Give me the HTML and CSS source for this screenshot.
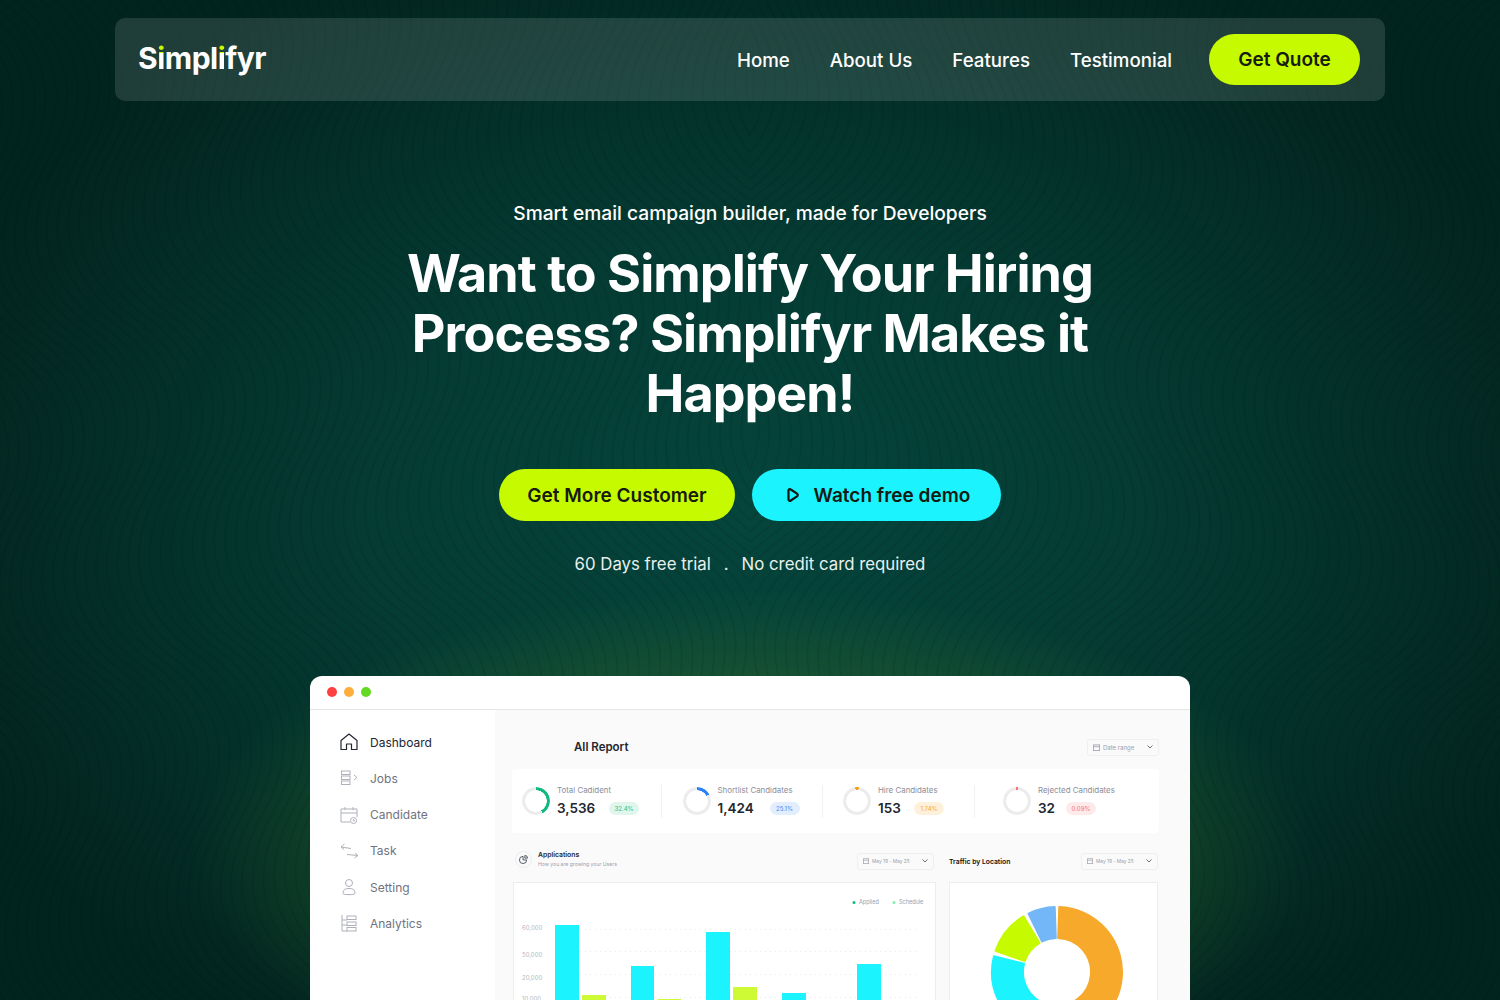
FILE: index.html
```html
<!DOCTYPE html>
<html lang="en">
<head>
    <meta charset="UTF-8">
    <meta name="viewport" content="width=device-width, initial-scale=1.0">
    <title>Simplifyr</title>
    <link rel="stylesheet" href="styles.css">
</head>
<body>

<!-- Wavy line texture behind everything -->
<svg class="waves" width="1500" height="1000" aria-hidden="true">
    <defs>
        <path id="waveLine" d="M0 0 C 57 -50, 113 -50, 170 0 S 283 50, 340 0"/>
        <pattern id="waveLeft" width="340" height="11" patternUnits="userSpaceOnUse" patternTransform="rotate(78)">
            <g fill="none" stroke="#000" stroke-opacity=".1" stroke-width="1.6">
                <use href="#waveLine" y="-44"/>
                <use href="#waveLine" y="-33"/>
                <use href="#waveLine" y="-22"/>
                <use href="#waveLine" y="-11"/>
                <use href="#waveLine" y="0"/>
                <use href="#waveLine" y="11"/>
                <use href="#waveLine" y="22"/>
                <use href="#waveLine" y="33"/>
                <use href="#waveLine" y="44"/>
                <use href="#waveLine" y="55"/>
            </g>
        </pattern>
    </defs>
    <rect width="750" height="1000" fill="url(#waveLeft)"/>
    <g transform="translate(1500 0) scale(-1 1)">
        <rect width="750" height="1000" fill="url(#waveLeft)"/>
    </g>
</svg>

<div class="page">

    <!-- Top nav -->
    <header class="navbar">
        <div class="logo">S<span class="logoDot">i</span>mpl<span class="logoDot">i</span>fyr</div>
        <nav class="navLinks">
            <a href="#">Home</a>
            <a href="#">About Us</a>
            <a href="#">Features</a>
            <a href="#">Testimonial</a>
        </nav>
        <a href="#" class="btn btnLime navBtn">Get Quote</a>
    </header>

    <!-- Hero text -->
    <section class="hero">
        <p class="heroSub">Smart email campaign builder, made for Developers</p>
        <h1>Want to Simplify Your Hiring<br>Process? Simplifyr Makes it<br>Happen!</h1>
        <div class="heroBtns">
            <a href="#" class="btn btnLime heroBtn">Get More Customer</a>
            <a href="#" class="btn btnCyan heroBtn">
                <svg width="16" height="16" viewBox="0 0 16 16" fill="none" stroke="#141414" stroke-width="2.2" stroke-linejoin="round"><path d="M3.500 3.500 C3.500 2.300 4.800 1.800 5.800 2.500 L12 6.600 C13 7.300 13 8.700 12 9.400 L5.800 13.500 C4.800 14.200 3.500 13.700 3.500 12.500 Z"/></svg>
                Watch free demo
            </a>
        </div>
        <p class="heroNote"><span>60 Days free trial</span><span>.</span><span>No credit card required</span></p>
    </section>

    <!-- App preview window -->
    <section class="appWindow">
        <div class="titleBar">
            <span class="dot dotRed"></span>
            <span class="dot dotYellow"></span>
            <span class="dot dotGreen"></span>
        </div>
        <div class="appBody">

            <aside class="sidebar">
                <a href="#" class="sideItem active">
                    <svg class="sideIcon" viewBox="0 0 18 18" fill="none" stroke="#222630" stroke-width="1.2"><path d="M1 7.500 L9 1 L17 7.500 V16.500 H11.500 V11 H6.500 V16.500 H1 Z" stroke-linejoin="round"/></svg>
                    Dashboard
                </a>
                <a href="#" class="sideItem">
                    <svg class="sideIcon" viewBox="0 0 18 18" fill="none" stroke="#aeb1ba"><rect x="1.500" y="2" width="8.500" height="3.500"/><rect x="1.500" y="7" width="8.500" height="3.500"/><rect x="1.500" y="12" width="8.500" height="3.500"/><path d="M14 6 L17 8.500 L14 11"/></svg>
                    Jobs
                </a>
                <a href="#" class="sideItem">
                    <svg class="sideIcon" viewBox="0 0 18 18" fill="none" stroke="#aeb1ba"><path d="M10 16 H1 V3 H17 V11"/><path d="M1 7 H17 M5 1 V4 M13 1 V4"/><circle cx="13.500" cy="14.500" r="3"/><path d="M13.500 13 V14.700 H15"/></svg>
                    Candidate
                </a>
                <a href="#" class="sideItem">
                    <svg class="sideIcon" viewBox="0 0 18 18" fill="none" stroke="#aeb1ba"><path d="M1 5 L11 6.500 M1 5 L4.500 2 M1 5 L4 7.500"/><path d="M7 12.500 L18 13.500 M18 13.500 L15 11 M18 13.500 L14.500 16"/></svg>
                    Task
                </a>
                <a href="#" class="sideItem">
                    <svg class="sideIcon" viewBox="0 0 18 18" fill="none" stroke="#aeb1ba"><circle cx="9" cy="5" r="3.500"/><path d="M3 15.500 C3 11 6 10.500 9 10.500 S15 11 15 15.500 C15 17 3 17 3 15.500 Z"/></svg>
                    Setting
                </a>
                <a href="#" class="sideItem">
                    <svg class="sideIcon" viewBox="0 0 18 18" fill="none" stroke="#aeb1ba"><path d="M2 1 V17 H7 M2 6 H7 M2 11 H7"/><rect x="7" y="2" width="9" height="3.500"/><rect x="7" y="8" width="9" height="3.500"/><rect x="7" y="13.500" width="9" height="3.500"/></svg>
                    Analytics
                </a>
            </aside>

            <main class="mainPane">
                <div class="reportHead">
                    <h2>All Report</h2>
                    <div class="datePill datePillLarge">
                        <svg width="7" height="7" viewBox="0 0 8 8" fill="none" stroke="#a4a7b0"><rect x=".5" y="1" width="7" height="6.500"/><path d="M.5 3 H7.500"/></svg>
                        <span>Date range</span>
                        <svg class="chev" width="6" height="4" viewBox="0 0 6 4" fill="none" stroke="#6b6f7b"><path d="M.5 .5 L3 3 L5.500 .5"/></svg>
                    </div>
                </div>

                <div class="statsCard">
                    <div class="stat">
                        <span class="ring ringGreen"></span>
                        <div>
                            <div class="statLabel">Total Cadident</div>
                            <div class="statRow"><b class="statValue">3,536</b><span class="badge badgeGreen">32.4%</span></div>
                        </div>
                    </div>
                    <div class="stat">
                        <span class="ring ringBlue"></span>
                        <div>
                            <div class="statLabel">Shortlist Candidates</div>
                            <div class="statRow"><b class="statValue">1,424</b><span class="badge badgeBlue">25.1%</span></div>
                        </div>
                    </div>
                    <div class="stat statShort">
                        <span class="ring ringOrange"></span>
                        <div>
                            <div class="statLabel">Hire Candidates</div>
                            <div class="statRow"><b class="statValue">153</b><span class="badge badgeOrange">1.74%</span></div>
                        </div>
                    </div>
                    <div class="stat statLast">
                        <span class="ring ringRed"></span>
                        <div>
                            <div class="statLabel">Rejected Candidates</div>
                            <div class="statRow"><b class="statValue">32</b><span class="badge badgeRed">0.09%</span></div>
                        </div>
                    </div>
                </div>

                <div class="panels">
                    <div class="panel panelChart">
                        <div class="panelHead">
                            <span class="panelIcon">
                                <svg width="9" height="9" viewBox="0 0 10 10" fill="none" stroke="#4a4e5a"><path d="M4.500 1.500 A4 4 0 1 0 8.500 5.500 H4.500 Z"/><path d="M6.500 .5 A3 3 0 0 1 9.500 3.500 H6.500 Z"/></svg>
                            </span>
                            <div class="panelTitles">
                                <div class="panelTitle">Applications</div>
                                <div class="panelSub">How you are growing your Users</div>
                            </div>
                            <div class="datePill">
                                <svg width="6" height="6" viewBox="0 0 8 8" fill="none" stroke="#a4a7b0"><rect x=".5" y="1" width="7" height="6.500"/><path d="M.5 3 H7.500"/></svg>
                                <span>May 19 - May 25</span>
                                <svg class="chev" width="6" height="4" viewBox="0 0 6 4" fill="none" stroke="#6b6f7b"><path d="M.5 .5 L3 3 L5.500 .5"/></svg>
                            </div>
                        </div>
                        <div class="chartCard">
                            <svg class="chartSvg" width="421" height="128" viewBox="0 0 421 128">
                                <g class="chartLegend">
                                    <circle cx="340" cy="19.500" r="1.500" fill="#10b981"/>
                                    <text x="345" y="20.500">Applied</text>
                                    <circle cx="380" cy="19.500" r="1.500" fill="#86efac"/>
                                    <text x="385" y="20.500">Schedule</text>
                                </g>
                                <g class="chartGrid">
                                    <path d="M66 46.500 H403 M66 68.500 H403 M66 91.500 H403 M66 114.500 H403"/>
                                </g>
                                <g class="chartAxis">
                                    <text x="8" y="47">60,000</text>
                                    <text x="8" y="74">50,000</text>
                                    <text x="8" y="97">20,000</text>
                                    <text x="8" y="118">10,000</text>
                                </g>
                                <rect class="barCyan" x="41" y="42" width="24" height="86"/>
                                <rect class="barLime" x="68" y="112" width="24" height="16"/>
                                <rect class="barCyan" x="117" y="83" width="23" height="45"/>
                                <rect class="barLime" x="144" y="116" width="23" height="12"/>
                                <rect class="barCyan" x="192" y="49" width="24" height="79"/>
                                <rect class="barLime" x="219" y="104" width="24" height="24"/>
                                <rect class="barCyan" x="268" y="110" width="24" height="18"/>
                                <rect class="barCyan" x="343" y="81" width="24" height="47"/>
                            </svg>
                        </div>
                    </div>

                    <div class="panel panelTraffic">
                        <div class="panelHead">
                            <div class="panelTitles">
                                <div class="panelTitle panelTitleDark">Traffic by Location</div>
                            </div>
                            <div class="datePill">
                                <svg width="6" height="6" viewBox="0 0 8 8" fill="none" stroke="#a4a7b0"><rect x=".5" y="1" width="7" height="6.500"/><path d="M.5 3 H7.500"/></svg>
                                <span>May 19 - May 25</span>
                                <svg class="chev" width="6" height="4" viewBox="0 0 6 4" fill="none" stroke="#6b6f7b"><path d="M.5 .5 L3 3 L5.500 .5"/></svg>
                            </div>
                        </div>
                        <div class="chartCard">
                            <svg class="donut" width="207" height="128" viewBox="1 1 207 128" stroke-width="2" stroke-linejoin="round">
                                <path fill="#f7a92b" stroke="#f7a92b" d="M110.27 25.04 A65 65 0 1 1 96.71 154.01 L102.1 123.48 A34 34 0 1 0 109.19 56.02 Z"/>
                                <path fill="#1bf3ff" stroke="#1bf3ff" d="M93.38 153.33 A65 65 0 0 1 44.93 74.28 L75.01 81.78 A34 34 0 0 0 100.35 123.13 Z"/>
                                <path fill="#c6fa00" stroke="#c6fa00" d="M46.54 68.84 A65 65 0 0 1 74.52 34.28 L90.49 60.86 A34 34 0 0 0 75.85 78.93 Z"/>
                                <path fill="#73b7f8" stroke="#73b7f8" d="M79.5 31.58 A65 65 0 0 1 105.73 25.04 L106.81 56.02 A34 34 0 0 0 93.1 59.44 Z"/>
                            </svg>
                        </div>
                    </div>
                </div>
            </main>
        </div>
    </section>

</div>

</body>
</html>
```

FILE: styles.css
```css
* {
    box-sizing: border-box;
}

html, body {
    margin: 0;
    height: 1000px;
    overflow: hidden;
}

body {
    position: relative;
    font-family: "Inter", "Liberation Sans", sans-serif;
    color: #fff;
    background-color: #02241e;
    background-image:
        radial-gradient(ellipse 560px 260px at 750px 850px, rgba(60, 120, 40, .5) 0, rgba(60, 120, 40, .5) 45%, rgba(60, 120, 40, 0) 100%),
        radial-gradient(ellipse 850px 620px at 750px 520px, #05453c 0%, rgba(5, 69, 60, .7) 45%, rgba(5, 69, 60, 0) 100%);
}

a {
    text-decoration: none;
    color: inherit;
}

.waves {
    position: absolute;
    top: 0;
    left: 0;
}

.page {
    position: relative;
    display: flex;
    flex-direction: column;
    align-items: center;
    padding-top: 18px;
}

/* nav */
.navbar {
    display: flex;
    align-items: center;
    width: 1270px;
    height: 83px;
    padding: 0 25px 0 23px;
    border-radius: 10px;
    background-color: rgba(255, 255, 255, .12);
}

.logo {
    font-size: 30px;
    font-weight: 700;
    letter-spacing: -.5px;
    margin-right: auto;
    margin-top: -3px;
}

.logoDot {
    background-image: linear-gradient(#c6fb00 36%, #fff 36%);
    -webkit-background-clip: text;
    background-clip: text;
    color: transparent;
}

.navLinks {
    display: flex;
    gap: 40px;
    font-size: 18.700px;
    font-weight: 500;
    margin-right: 37px;
    padding-top: 1px;
}

.btn {
    display: flex;
    align-items: center;
    justify-content: center;
    color: #161a10;
    font-weight: 600;
    border-radius: 26px;
    height: 52px;
}

.btnLime {
    background-color: #c6fa00;
}

.btnCyan {
    background-color: #1bf3ff;
}

.navBtn {
    width: 151px;
    height: 51px;
    font-size: 19px;
}

/* hero */
.hero {
    display: flex;
    flex-direction: column;
    align-items: center;
    text-align: center;
}

.heroSub {
    margin: 100px 0 0;
    font-size: 19.200px;
    font-weight: 500;
    line-height: 24px;
}

.hero h1 {
    margin: 19px 0 0;
    font-size: 52px;
    line-height: 60px;
    font-weight: 700;
    letter-spacing: -.95px;
}

.heroBtns {
    display: flex;
    gap: 17px;
    margin-top: 45px;
}

.heroBtn {
    font-size: 19px;
    gap: 13px;
}

.heroBtn:first-child {
    width: 236px;
}

.heroBtn:last-child {
    width: 249px;
    padding-left: 2px;
}

.heroNote {
    display: flex;
    gap: 13px;
    margin: 30px 0 0;
    font-size: 16.800px;
    line-height: 26px;
    color: #e8f0ee;
}

/* app window */
.appWindow {
    width: 880px;
    height: 324px;
    margin-top: 99px;
    border-radius: 12px 12px 0 0;
    background-color: #fff;
    color: #222630;
    overflow: hidden;
}

.titleBar {
    display: flex;
    align-items: center;
    gap: 7px;
    height: 34px;
    padding-left: 17px;
    padding-bottom: 2px;
    border-bottom: 1px solid #e6e6e8;
}

.dot {
    width: 10px;
    height: 10px;
    border-radius: 50%;
}

.dotRed { background-color: #ff4040; }
.dotYellow { background-color: #ffae3b; }
.dotGreen { background-color: #63d924; }

.appBody {
    display: flex;
    height: 290px;
}

.sidebar {
    display: flex;
    flex-direction: column;
    flex: none;
    gap: 18.300px;
    width: 185px;
    padding: 23px 0 0 30px;
}

.sideItem {
    display: flex;
    align-items: center;
    gap: 12px;
    height: 18px;
    font-size: 12px;
    color: #6f7380;
}

.sideItem.active {
    color: #222630;
}

.sideIcon {
    width: 18px;
    height: 18px;
    flex: none;
}

.mainPane {
    flex: 1;
    min-width: 0;
    padding: 29px 31px 0 17px;
    background-color: #fafafa;
}

.reportHead {
    display: flex;
    align-items: center;
    justify-content: space-between;
    height: 16px;
}

.reportHead h2 {
    margin: 0 0 0 62px;
    font-size: 11.500px;
    font-weight: 600;
}

.datePill {
    display: flex;
    align-items: center;
    gap: 3px;
    width: 77px;
    height: 17px;
    padding: 0 5px;
    border: 1px solid #efeff1;
    border-radius: 3px;
    font-size: 4.800px;
    color: #9a9ea9;
}

.datePillLarge {
    width: 72px;
    font-size: 6px;
}

.chev {
    margin-left: auto;
}

/* stat cards */
.statsCard {
    display: flex;
    height: 64px;
    margin-top: 14px;
    padding: 16px 0 0 10px;
    border-radius: 4px;
    background-color: #fff;
}

.stat {
    display: flex;
    gap: 7px;
    width: 140px;
    height: 33px;
    margin-right: 20.500px;
    border-right: 1px solid #f1f1f3;
}

.stat.statShort {
    width: 132px;
    margin-right: 28px;
}

.stat.statLast {
    width: 130px;
    margin-right: 0;
    border-right: none;
}

.ring {
    width: 28px;
    height: 28px;
    margin-top: 2px;
    border-radius: 50%;
    flex: none;
    -webkit-mask: radial-gradient(circle, transparent 10.500px, #000 11px);
    mask: radial-gradient(circle, transparent 10.500px, #000 11px);
}

.ringGreen { background: conic-gradient(#10b981 0 42%, #ececec 42% 100%); }
.ringBlue { background: conic-gradient(#2b82f6 0 17%, #ececec 17% 100%); }
.ringOrange { background: conic-gradient(#f59e0b 0 2%, #ececec 2% 98%, #f59e0b 98% 100%); }
.ringRed { background: conic-gradient(#f87171 0 1%, #ececec 1% 99%, #f87171 99% 100%); }

.statLabel {
    font-size: 7.900px;
    line-height: 10px;
    color: #8a8e9a;
}

.statRow {
    display: flex;
    align-items: center;
    margin-top: 5px;
}

.statValue {
    font-size: 13.500px;
    line-height: 16px;
    font-weight: 600;
    width: 52px;
}

.statShort .statValue {
    width: 36px;
}

.statLast .statValue {
    width: 28px;
}

.badge {
    display: flex;
    align-items: center;
    justify-content: center;
    width: 30px;
    height: 13px;
    border-radius: 7px;
    font-size: 6px;
    font-weight: 500;
}

.badgeGreen { background-color: #e0f6ed; color: #34c795; }
.badgeBlue { background-color: #e2eefe; color: #4f94f5; }
.badgeOrange { background-color: #fef1dc; color: #f6b042; }
.badgeRed { background-color: #feeaea; color: #f98080; }

/* panels under the stats */
.panels {
    display: flex;
    gap: 13px;
    margin-top: 18px;
    margin-left: 1px;
}

.panelChart {
    width: 423px;
}

.panelTraffic {
    width: 209px;
}

.panelHead {
    display: flex;
    align-items: center;
    height: 20px;
}

.panelChart .panelHead {
    margin-left: 2px;
    padding-right: 2px;
}

.panelIcon {
    display: flex;
    align-items: center;
    justify-content: center;
    width: 17px;
    height: 17px;
    margin: -3px 6px 0 0;
    border: 1px solid #ececef;
    border-radius: 50%;
}

.panelTitles {
    margin-right: auto;
}

.panelChart .panelTitles {
    margin-top: -4px;
}

.panelTitle {
    font-size: 6.800px;
    line-height: 9px;
    font-weight: 600;
}

.panelTitleDark {
    color: #111;
}

.panelSub {
    font-size: 5.100px;
    line-height: 8px;
    color: #9a9ea9;
    margin-top: 1px;
}

.chartCard {
    height: 130px;
    margin-top: 11px;
    border: 1px solid #ededef;
    background-color: #fff;
    overflow: hidden;
}

.chartSvg, .donut {
    display: block;
}

.chartLegend text {
    font-size: 5.500px;
    fill: #9a9ea9;
}

.chartAxis text {
    font-size: 6px;
    fill: #b4b7c0;
}

.chartGrid path {
    stroke: #e8e8eb;
    stroke-dasharray: 1 4;
    fill: none;
}

.barCyan { fill: #1bf3ff; }
.barLime { fill: #cdf935; }
```
